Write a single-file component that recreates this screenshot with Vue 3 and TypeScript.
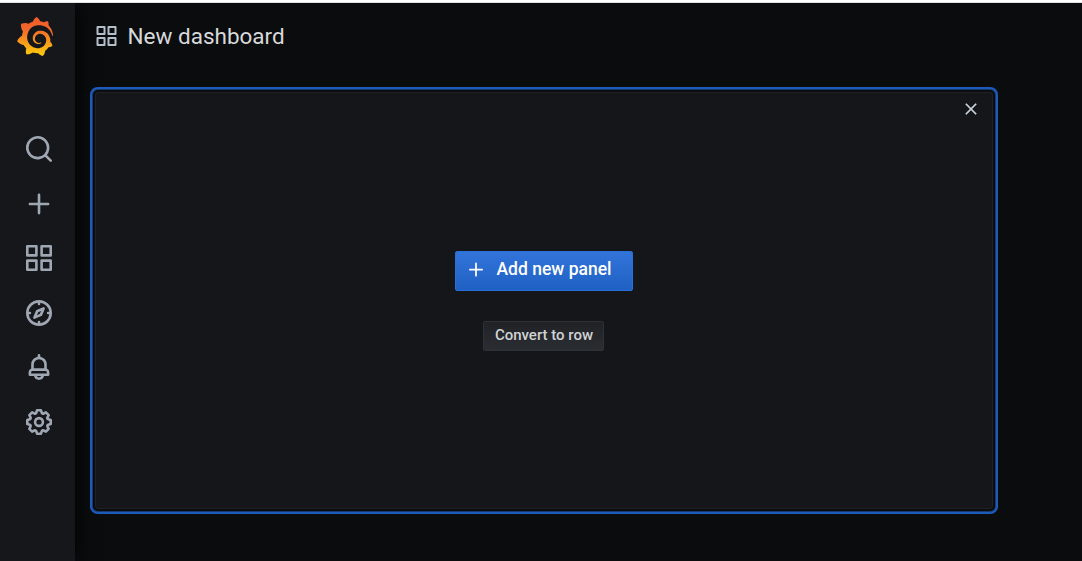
<script setup lang="ts">
interface NavItem {
  label: string
  path: string
}

const apps =
  'M10,13H3a1,1,0,0,0-1,1v7a1,1,0,0,0,1,1h7a1,1,0,0,0,1-1V14A1,1,0,0,0,10,13ZM9,20H4V15H9ZM21,2H14a1,1,0,0,0-1,1v7a1,1,0,0,0,1,1h7a1,1,0,0,0,1-1V3A1,1,0,0,0,21,2ZM20,9H15V4h5Zm1,4H14a1,1,0,0,0-1,1v7a1,1,0,0,0,1,1h7a1,1,0,0,0,1-1V14A1,1,0,0,0,21,13Zm-1,7H15V15h5ZM10,2H3A1,1,0,0,0,2,3v7a1,1,0,0,0,1,1h7a1,1,0,0,0,1-1V3A1,1,0,0,0,10,2ZM9,9H4V4H9Z'
const plus = 'M19,11H13V5a1,1,0,0,0-2,0v6H5a1,1,0,0,0,0,2h6v6a1,1,0,0,0,2,0V13h6a1,1,0,0,0,0-2Z'
const times =
  'M13.41,12l6.3-6.29a1,1,0,1,0-1.42-1.42L12,10.59,5.71,4.29A1,1,0,0,0,4.29,5.71L10.59,12l-6.3,6.29a1,1,0,0,0,0,1.42,1,1,0,0,0,1.42,0L12,13.41l6.29,6.3a1,1,0,0,0,1.42,0,1,1,0,0,0,0-1.42Z'

const navItems: NavItem[] = [
  {
    label: 'Search',
    path: 'M21.71,20.29,18,16.61A9,9,0,1,0,16.61,18l3.68,3.68a1,1,0,0,0,1.42,0A1,1,0,0,0,21.71,20.29ZM11,18a7,7,0,1,1,7-7A7,7,0,0,1,11,18Z',
  },
  { label: 'Create', path: plus },
  { label: 'Dashboards', path: apps },
  {
    label: 'Explore',
    path: 'M12,2A10,10,0,1,0,22,12,10,10,0,0,0,12,2Zm1,17.93V19a1,1,0,0,0-2,0v.93A8,8,0,0,1,4.07,13H5a1,1,0,0,0,0-2H4.07A8,8,0,0,1,11,4.07V5a1,1,0,0,0,2,0V4.07A8,8,0,0,1,19.93,11H19a1,1,0,0,0,0,2h.93A8,8,0,0,1,13,19.93ZM15.14,7.55l-5,2.12a1,1,0,0,0-.52.52l-2.12,5a1,1,0,0,0,.21,1.1,1,1,0,0,0,.7.3.93.93,0,0,0,.4-.09l5-2.12a1,1,0,0,0,.52-.52l2.12-5a1,1,0,0,0-1.31-1.31Zm-2.49,5.1-2.28,1,1-2.28,2.28-1Z',
  },
  {
    label: 'Alerting',
    path: 'M18,13.18V10a6,6,0,0,0-5-5.91V3a1,1,0,0,0-2,0V4.09A6,6,0,0,0,6,10v3.18A3,3,0,0,0,4,16v2a1,1,0,0,0,1,1H8.14a4,4,0,0,0,7.72,0H19a1,1,0,0,0,1-1V16A3,3,0,0,0,18,13.18ZM8,10a4,4,0,0,1,8,0v3H8Zm4,10a2,2,0,0,1-1.72-1h3.44A2,2,0,0,1,12,20Zm6-3H6V16a1,1,0,0,1,1-1H17a1,1,0,0,1,1,1Z',
  },
  {
    label: 'Configuration',
    path: 'M21.32,9.55l-1.89-.63.89-1.78A1,1,0,0,0,20.13,6L18,3.87a1,1,0,0,0-1.15-.19l-1.78.89-.63-1.89A1,1,0,0,0,13.5,2h-3a1,1,0,0,0-.95.68L8.92,4.57,7.14,3.68A1,1,0,0,0,6,3.87L3.87,6a1,1,0,0,0-.19,1.15l.89,1.78-1.89.63A1,1,0,0,0,2,10.5v3a1,1,0,0,0,.68.95l1.89.63-.89,1.78A1,1,0,0,0,3.87,18L6,20.13a1,1,0,0,0,1.15.19l1.78-.89.63,1.89a1,1,0,0,0,.95.68h3a1,1,0,0,0,.95-.68l.63-1.89,1.78.89A1,1,0,0,0,18,20.13L20.13,18a1,1,0,0,0,.19-1.15l-.89-1.78,1.89-.63A1,1,0,0,0,22,13.5v-3A1,1,0,0,0,21.32,9.55ZM20,12.78l-1.2.4A2,2,0,0,0,17.64,16l.57,1.14-1.1,1.1L16,17.64a2,2,0,0,0-2.79,1.16l-.4,1.2H11.22l-.4-1.2A2,2,0,0,0,8,17.64l-1.14.57-1.1-1.1L6.36,16A2,2,0,0,0,5.2,13.18L4,12.78V11.22l1.2-.4A2,2,0,0,0,6.36,8L5.79,6.89l1.1-1.1L8,6.36A2,2,0,0,0,10.82,5.2l.4-1.2h1.56l.4,1.2A2,2,0,0,0,16,6.36l1.14-.57,1.1,1.1L17.64,8a2,2,0,0,0,1.16,2.79l1.2.4ZM12,8a4,4,0,1,0,4,4A4,4,0,0,0,12,8Zm0,6a2,2,0,1,1,2-2A2,2,0,0,1,12,14Z',
  },
]
</script>

<template>
  <div class="page">
    <div class="window-edge"></div>
    <div class="app">
      <nav class="sidebar">
        <svg class="logo" viewBox="0 0 351 365">
          <defs>
            <linearGradient id="flame" gradientUnits="userSpaceOnUse" x1="175.5" y1="365" x2="175.5" y2="0">
              <stop offset="0" stop-color="#fdc810" />
              <stop offset="0.2" stop-color="#fbb414" />
              <stop offset="0.4" stop-color="#f8931f" />
              <stop offset="0.7" stop-color="#f3672a" />
              <stop offset="1" stop-color="#f05a28" />
            </linearGradient>
          </defs>
          <path
            fill="url(#flame)"
            d="M342,161.2c-0.6-6.1-1.6-13.1-3.6-20.9c-2-7.7-5-16.2-9.4-25c-4.4-8.8-10.1-17.9-17.5-26.8c-2.9-3.5-6.1-6.9-9.5-10.2c5.1-20.3-6.2-37.9-6.2-37.9c-19.5-1.2-31.9,6.1-36.5,9.4c-0.8-0.3-1.5-0.7-2.3-1c-3.3-1.3-6.7-2.6-10.3-3.7c-3.5-1.1-7.1-2.1-10.8-3c-3.7-0.9-7.4-1.6-11.2-2.2c-0.7-0.1-1.3-0.2-2-0.3c-8.5-27.2-32.9-38.6-32.9-38.6c-27.3,17.3-32.4,41.5-32.4,41.5s-0.1,0.5-0.3,1.4c-1.5,0.4-3,0.9-4.5,1.3c-2.1,0.6-4.2,1.4-6.2,2.2c-2.1,0.8-4.1,1.6-6.2,2.5c-4.1,1.8-8.2,3.8-12.2,6c-3.9,2.2-7.7,4.6-11.4,7.1c-0.5-0.2-1-0.4-1-0.4c-37.8-14.4-71.3,2.9-71.3,2.9c-3.1,40.2,15.1,65.5,18.7,70.1c-0.9,2.5-1.7,5-2.5,7.5c-2.8,9.1-4.9,18.4-6.2,28.1c-0.2,1.4-0.4,2.8-0.5,4.2C18.8,192.7,8.5,228,8.5,228c29.1,33.5,63.1,35.6,63.1,35.6c0,0,0.1-0.1,0.1-0.1c4.3,7.7,9.3,15,14.9,21.9c2.4,2.9,4.8,5.6,7.4,8.3c-10.6,30.4,1.5,55.6,1.5,55.6c32.4,1.2,53.7-14.2,58.2-17.7c3.2,1.1,6.5,2.1,9.8,2.9c10,2.6,20.2,4.1,30.4,4.5c2.5,0.1,5.1,0.2,7.6,0.1l1.2,0l0.8,0l1.6,0l1.6-0.1l0,0.1c15.3,21.8,42.1,24.9,42.1,24.9c19.1-20.1,20.2-40.1,20.2-44.4l0,0c0,0,0-0.1,0-0.3c0-0.4,0-0.6,0-0.6l0,0c0-0.3,0-0.6,0-0.9c4-2.8,7.8-5.8,11.4-9.1c7.6-6.9,14.3-14.8,19.9-23.3c0.5-0.8,1-1.6,1.5-2.4c21.6,1.2,36.9-13.4,36.9-13.4c-3.6-22.5-16.4-33.5-19.1-35.6l0,0c0,0-0.1-0.1-0.3-0.2c-0.2-0.1-0.2-0.2-0.2-0.2c0,0,0,0,0,0c-0.1-0.1-0.3-0.2-0.5-0.3c0.1-1.4,0.2-2.7,0.3-4.1c0.2-2.4,0.2-4.9,0.2-7.3l0-1.8l0-0.9l0-0.5c0-0.6,0-0.4,0-0.6l-0.1-1.5l-0.1-2c0-0.7-0.1-1.3-0.2-1.9c-0.1-0.6-0.1-1.3-0.2-1.9l-0.2-1.9l-0.3-1.9c-0.4-2.5-0.8-4.9-1.4-7.4c-2.3-9.7-6.1-18.9-11-27.2c-5-8.3-11.2-15.6-18.3-21.8c-7-6.2-14.9-11.2-23.1-14.9c-8.3-3.7-16.9-6.1-25.5-7.2c-4.3-0.6-8.6-0.8-12.9-0.7l-1.6,0l-0.4,0c-0.1,0-0.6,0-0.5,0l-0.7,0l-1.6,0.1c-0.6,0-1.2,0.1-1.7,0.1c-2.2,0.2-4.4,0.5-6.5,0.9c-8.6,1.6-16.7,4.7-23.8,9c-7.1,4.3-13.3,9.6-18.3,15.6c-5,6-8.9,12.7-11.6,19.6c-2.7,6.9-4.2,14.1-4.6,21c-0.1,1.7-0.1,3.5-0.1,5.2c0,0.4,0,0.9,0,1.3l0.1,1.4c0.1,0.8,0.1,1.7,0.2,2.5c0.3,3.5,1,6.9,1.9,10.1c1.9,6.5,4.9,12.4,8.6,17.4c3.7,5,8.2,9.1,12.9,12.4c4.7,3.2,9.8,5.5,14.8,7c5,1.5,10,2.1,14.7,2.1c0.6,0,1.2,0,1.7,0c0.3,0,0.6,0,0.9,0c0.3,0,0.6,0,0.9-0.1c0.5,0,1-0.1,1.5-0.1c0.1,0,0.3,0,0.4-0.1l0.5-0.1c0.3,0,0.6-0.1,0.9-0.1c0.6-0.1,1.1-0.2,1.7-0.3c0.6-0.1,1.1-0.2,1.6-0.4c1.1-0.2,2.1-0.6,3.1-0.9c2-0.7,4-1.5,5.7-2.4c1.8-0.9,3.4-2,5-3c0.4-0.3,0.9-0.6,1.3-1c1.6-1.3,1.9-3.7,0.6-5.3c-1.1-1.4-3.1-1.8-4.7-0.9c-0.4,0.2-0.8,0.4-1.2,0.6c-1.4,0.7-2.8,1.3-4.3,1.8c-1.5,0.5-3.1,0.9-4.7,1.2c-0.8,0.1-1.6,0.2-2.5,0.3c-0.4,0-0.8,0.1-1.3,0.1c-0.4,0-0.9,0-1.2,0c-0.4,0-0.8,0-1.2,0c-0.5,0-1,0-1.5-0.1c0,0-0.3,0-0.1,0l-0.2,0l-0.5,0c-0.2,0-0.5,0-0.7-0.1c-0.5-0.1-0.9-0.1-1.4-0.2c-3.7-0.5-7.4-1.6-10.9-3.2c-3.6-1.6-7-3.8-10.1-6.6c-3.1-2.8-5.8-6.1-7.9-9.9c-2.1-3.8-3.6-8-4.3-12.4c-0.3-2.2-0.5-4.5-0.4-6.7c0-0.6,0.1-1.2,0.1-1.8c0,0.2,0-0.1,0-0.1l0-0.2l0-0.5c0-0.3,0.1-0.6,0.1-0.9c0.1-1.2,0.3-2.4,0.5-3.6c1.7-9.6,6.5-19,13.9-26.1c1.9-1.8,3.9-3.4,6-4.9c2.1-1.5,4.4-2.8,6.8-3.9c2.4-1.1,4.8-2,7.4-2.7c2.5-0.7,5.1-1.1,7.8-1.4c1.3-0.1,2.6-0.2,4-0.2c0.4,0,0.6,0,0.9,0l1.1,0l0.7,0c0.3,0,0,0,0.1,0l0.3,0l1.1,0.1c2.9,0.2,5.7,0.6,8.5,1.3c5.6,1.2,11.1,3.3,16.2,6.1c10.2,5.7,18.9,14.5,24.2,25.1c2.7,5.3,4.6,11,5.5,16.9c0.2,1.5,0.4,3,0.5,4.5l0.1,1.1l0.1,1.1c0,0.4,0,0.8,0,1.1c0,0.4,0,0.8,0,1.1l0,1l0,1.1c0,0.7-0.1,1.9-0.1,2.6c-0.1,1.6-0.3,3.3-0.5,4.9c-0.2,1.6-0.5,3.2-0.8,4.8c-0.3,1.6-0.7,3.2-1.1,4.7c-0.8,3.1-1.8,6.2-3,9.3c-2.4,6-5.6,11.8-9.4,17.1c-7.7,10.6-18.2,19.2-30.2,24.7c-6,2.7-12.3,4.7-18.8,5.7c-3.2,0.6-6.5,0.9-9.8,1l-0.6,0l-0.5,0l-1.1,0l-1.6,0l-0.8,0c0.4,0-0.1,0-0.1,0l-0.3,0c-1.8,0-3.5-0.1-5.3-0.3c-7-0.5-13.9-1.8-20.7-3.7c-6.7-1.9-13.2-4.6-19.4-7.8c-12.3-6.6-23.4-15.6-32-26.5c-4.3-5.4-8.1-11.3-11.2-17.4c-3.1-6.1-5.6-12.6-7.4-19.1c-1.8-6.6-2.9-13.3-3.4-20.1l-0.1-1.3l0-0.3l0-0.3l0-0.6l0-1.1l0-0.3l0-0.4l0-0.8l0-1.6l0-0.3c0,0,0,0.1,0-0.1l0-0.6c0-0.8,0-1.7,0-2.5c0.1-3.3,0.4-6.8,0.8-10.2c0.4-3.4,1-6.9,1.7-10.3c0.7-3.4,1.5-6.8,2.5-10.2c1.9-6.7,4.3-13.2,7.1-19.3c5.7-12.2,13.1-23.1,22-31.8c2.2-2.2,4.5-4.2,6.9-6.2c2.4-1.9,4.9-3.7,7.5-5.4c2.5-1.7,5.2-3.2,7.9-4.6c1.3-0.7,2.7-1.4,4.1-2c0.7-0.3,1.4-0.6,2.1-0.9c0.7-0.3,1.4-0.6,2.1-0.9c2.8-1.2,5.7-2.2,8.7-3.1c0.7-0.2,1.5-0.4,2.2-0.7c0.7-0.2,1.5-0.4,2.2-0.6c1.5-0.4,3-0.8,4.5-1.1c0.7-0.2,1.5-0.3,2.3-0.5c0.8-0.2,1.5-0.3,2.3-0.5c0.8-0.1,1.5-0.3,2.3-0.4l1.1-0.2l1.2-0.2c0.8-0.1,1.5-0.2,2.3-0.3c0.9-0.1,1.7-0.2,2.6-0.3c0.7-0.1,1.9-0.2,2.6-0.3c0.5-0.1,1.1-0.1,1.6-0.2l1.1-0.1l0.5-0.1l0.6,0c0.9-0.1,1.7-0.1,2.6-0.2l1.3-0.1c0,0,0.5,0,0.1,0l0.3,0l0.6,0c0.7,0,1.5-0.1,2.2-0.1c2.9-0.1,5.9-0.1,8.8,0c5.8,0.2,11.5,0.9,17,1.9c11.1,2.1,21.5,5.6,31,10.3c9.5,4.6,17.9,10.3,25.3,16.5c0.5,0.4,0.9,0.8,1.4,1.2c0.4,0.4,0.9,0.8,1.3,1.2c0.9,0.8,1.7,1.6,2.6,2.4c0.9,0.8,1.7,1.6,2.5,2.4c0.8,0.8,1.6,1.6,2.4,2.5c3.1,3.3,6,6.6,8.6,10c5.2,6.7,9.4,13.5,12.7,19.9c0.2,0.4,0.4,0.8,0.6,1.2c0.2,0.4,0.4,0.8,0.6,1.2c0.4,0.8,0.8,1.6,1.1,2.4c0.4,0.8,0.7,1.5,1.1,2.3c0.3,0.8,0.7,1.5,1,2.3c1.2,3,2.4,5.9,3.3,8.6c1.5,4.4,2.6,8.3,3.5,11.7c0.3,1.4,1.6,2.3,3,2.1c1.5-0.1,2.6-1.3,2.6-2.8C342.6,170.4,342.5,166.1,342,161.2z"
          />
        </svg>
        <div class="nav-list">
          <a v-for="item in navItems" :key="item.label" class="nav-item" :aria-label="item.label">
            <svg viewBox="-0.3 -0.3 24.6 24.6"><path :d="item.path" /></svg>
          </a>
        </div>
      </nav>

      <main class="main">
        <header class="toolbar">
          <svg class="title-icon" viewBox="0 0 24 24"><path :d="apps" /></svg>
          <h1 class="title">New dashboard</h1>
        </header>
        <section class="panel">
          <button class="close" aria-label="Close">
            <svg viewBox="0 0 24 24"><path :d="times" /></svg>
          </button>
          <div class="actions">
            <button class="btn primary">
              <svg viewBox="0 0 24 24"><path :d="plus" /></svg>
              <span>Add new panel</span>
            </button>
            <button class="btn secondary"><span>Convert to row</span></button>
          </div>
        </section>
      </main>
    </div>
  </div>
</template>

<style>
body {
  margin: 0;
  background: #0b0c0e;
}
</style>

<style scoped>
.page {
  display: flex;
  flex-direction: column;
  width: 1082px;
  height: 561px;
  overflow: hidden;
  font-family: Roboto, "Liberation Sans", sans-serif;
}

.window-edge {
  flex: none;
  height: 2px;
  border-bottom: 1px solid #dfe1e6;
  background: #fff;
}

.app {
  display: flex;
  flex: 1;
  min-height: 0;
  overflow: hidden;
  background: #0b0c0e;
}

.app svg {
  display: block;
  flex: none;
  fill: currentColor;
}

.sidebar {
  display: flex;
  flex: none;
  flex-direction: column;
  width: 75px;
  background: #16171a;
  box-shadow: 0 0 20px #000;
}

.logo {
  width: 38px;
  height: 39px;
  margin: 14px 0 0 16px;
}

.nav-list {
  display: flex;
  flex-direction: column;
  margin-top: 65.7px;
  padding-left: 23px;
  color: #9fa7b3;
}

.nav-item {
  display: flex;
  align-items: center;
  height: 54.6px;
}

.nav-item svg {
  width: 32px;
  height: 32px;
}

.main {
  display: flex;
  flex: 1;
  flex-direction: column;
}

.toolbar {
  display: flex;
  flex: none;
  align-items: center;
  height: 66px;
  padding-left: 19px;
}

.title-icon {
  width: 25px;
  height: 24px;
  color: #b4bec9;
}

.title {
  margin: 0 0 0 8.5px;
  color: #d8d9da;
  font-size: 22.5px;
  font-weight: 400;
  line-height: 30px;
}

.panel {
  display: flex;
  flex: none;
  flex-direction: column;
  box-sizing: border-box;
  width: 898px;
  height: 417px;
  margin: 23px 0 0 20px;
  border: 1px solid #202226;
  border-radius: 3px;
  background: #151619;
  box-shadow: 0 0 0 2px #0b0c0e, 0 0 0 3px #14386f, 0 0 0 5px #1e5bb8;
}

button {
  margin: 0;
  padding: 0;
  border: 0;
  background: none;
  font-family: inherit;
}

.close {
  align-self: flex-end;
  margin: 8px 13px 0 0;
  color: #c7d0d9;
}

.close svg {
  width: 16px;
  height: 16px;
  stroke: currentColor;
  stroke-width: 0.6;
}

.actions {
  display: flex;
  flex-direction: column;
  align-items: center;
  gap: 30px;
  margin-top: 134px;
}

.btn {
  display: flex;
  align-items: center;
  box-sizing: border-box;
  border-radius: 2px;
  font-weight: 500;
}

.primary {
  width: 178px;
  height: 40px;
  padding: 0 0 4px 9px;
  border: 1px solid #2b6fd8;
  background: linear-gradient(180deg, #3274d9 0%, #1f60c4 100%);
  color: #fff;
  font-size: 17.5px;
}

.primary svg {
  width: 22px;
  height: 21px;
  margin-right: 9.5px;
}

.secondary {
  justify-content: center;
  width: 121px;
  height: 30px;
  margin-right: 1px;
  padding: 0 0 2px 1px;
  border: 1px solid #2c3235;
  background: linear-gradient(180deg, #202226 0%, #2a2d31 100%);
  color: #d0d2d5;
  font-size: 15px;
}
</style>
